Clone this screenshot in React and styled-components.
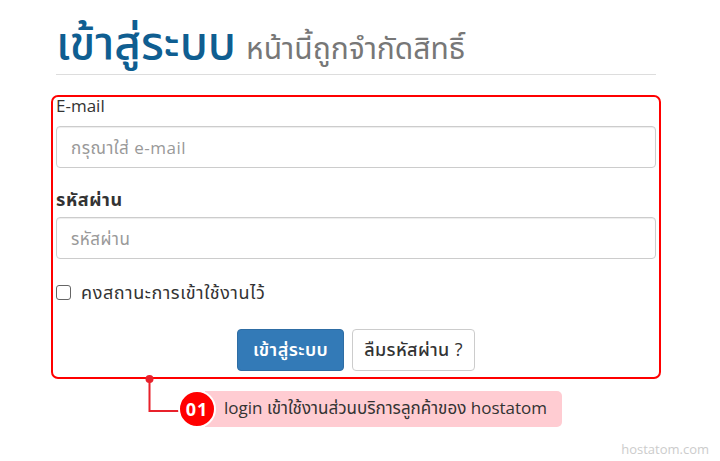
import React from 'react';
import styled, { createGlobalStyle } from 'styled-components';

const GlobalStyle = createGlobalStyle`
  html, body {
    margin: 0;
    padding: 0;
    background: #fff;
  }
  body {
    font-family: "Open Sans", "Noto Sans", "Noto Sans Thai", "Noto Sans Thai UI", sans-serif;
    color: #333;
    font-size: 16px;
  }
  * { box-sizing: border-box; }
`;

const Page = styled.div`
  position: relative;
  width: 720px;
  height: 461px;
  padding: 15px 0 0 51px;
`;

const Header = styled.div`
  width: 600px;
  height: 60px;
  margin-left: 5px;
  border-bottom: 1px solid #ddd;
  display: flex;
  align-items: baseline;
  gap: 10px;
`;

const Title = styled.h1`
  margin: 0;
  font-size: 46px;
  font-weight: 500;
  color: #0f5e91;
  line-height: 52px;
`;

const Subtitle = styled.span`
  font-size: 30px;
  line-height: 52px;
  color: #777;
`;

const Frame = styled.div`
  margin-top: 20px;
  width: 610px;
  border: 2px solid #ff0000;
  border-radius: 7px;
  padding: 0 3px 6px 3px;
`;

const Label = styled.label`
  display: block;
  font-weight: ${p => (p.$heavy ? 700 : 400)};
  font-size: ${p => (p.$heavy ? 18 : 17)}px;
  letter-spacing: ${p => (p.$heavy ? 0.6 : 0)}px;
  line-height: 22px;
  margin: ${p => p.$top}px 0 ${p => p.$gap}px 0;
`;

const Input = styled.input`
  display: block;
  width: 600px;
  height: 42px;
  border: 1px solid #ccc;
  border-radius: 4px;
  padding: 0 14px;
  font: inherit;
  font-size: 17px;
  letter-spacing: 0.5px;
  color: #555;
  box-shadow: inset 0 1px 1px rgba(0, 0, 0, 0.075);
  &::placeholder {
    color: #999;
  }
`;

const CheckRow = styled.label`
  display: flex;
  align-items: center;
  gap: 10px;
  margin-top: 22px;
  font-size: 18px;
  letter-spacing: 0.6px;
  line-height: 22px;
`;

const Check = styled.span`
  width: 15px;
  height: 15px;
  border: 1px solid #666;
  border-radius: 3px;
  background: #fff;
`;

const Actions = styled.div`
  display: flex;
  justify-content: center;
  gap: 8px;
  margin-top: 26px;
`;

const Button = styled.button`
  height: 42px;
  padding: 0 ${p => (p.$primary ? 15 : 11)}px;
  border-radius: 4px;
  font: inherit;
  font-size: 18px;
  font-weight: ${p => (p.$primary ? 600 : 500)};
  letter-spacing: 0.4px;
  border: 1px solid ${p => (p.$primary ? '#2e6da4' : '#ccc')};
  background: ${p => (p.$primary ? '#337ab7' : '#fff')};
  color: ${p => (p.$primary ? '#fff' : '#333')};
`;

const Callout = styled.div`
  display: flex;
  align-items: flex-end;
  margin: -4px 0 0 94px;
`;

const Connector = styled.svg`
  flex: none;
  display: block;
`;

const Note = styled.div`
  display: flex;
  align-items: center;
  margin-left: -3px;
  margin-bottom: 3px;
`;

const Badge = styled.div`
  position: relative;
  z-index: 1;
  width: 38px;
  height: 38px;
  border-radius: 50%;
  background: #f00;
  border: 2px solid #fff;
  color: #fff;
  font-weight: 700;
  font-size: 18px;
  display: flex;
  align-items: center;
  justify-content: center;
  letter-spacing: 1px;
`;

const NoteText = styled.div`
  margin-left: -11px;
  height: 36px;
  padding: 0 15px 0 19px;
  background: #ffccd2;
  border-radius: 0 5px 5px 0;
  display: flex;
  align-items: center;
  font-size: 17px;
  color: #333;
`;

const Watermark = styled.div`
  position: absolute;
  right: 11px;
  bottom: 3px;
  font-size: 13px;
  color: #ccc;
`;

export default function App() {
  return (
    <Page>
      <GlobalStyle />
      <Header>
        <Title>เข้าสู่ระบบ</Title>
        <Subtitle>หน้านี้ถูกจำกัดสิทธิ์</Subtitle>
      </Header>
      <Frame>
        <Label $top={-2} $gap={9}>E-mail</Label>
        <Input placeholder="กรุณาใส่ e-mail" />
        <Label $top={20} $gap={7} $heavy>รหัสผ่าน</Label>
        <Input placeholder="รหัสผ่าน" />
        <CheckRow>
          <Check />
          คงสถานะการเข้าใช้งานไว้
        </CheckRow>
        <Actions>
          <Button $primary>เข้าสู่ระบบ</Button>
          <Button>ลืมรหัสผ่าน ?</Button>
        </Actions>
      </Frame>
      <Callout>
        <Connector width="36" height="56" viewBox="0 0 36 56">
          <circle cx="4.5" cy="4" r="4" fill="#e8212b" />
          <path d="M4.5 4 V36 H36" fill="none" stroke="#e8212b" strokeWidth="2" />
        </Connector>
        <Note>
          <Badge>01</Badge>
          <NoteText>login เข้าใช้งานส่วนบริการลูกค้าของ hostatom</NoteText>
        </Note>
      </Callout>
      <Watermark>hostatom.com</Watermark>
    </Page>
  );
}
